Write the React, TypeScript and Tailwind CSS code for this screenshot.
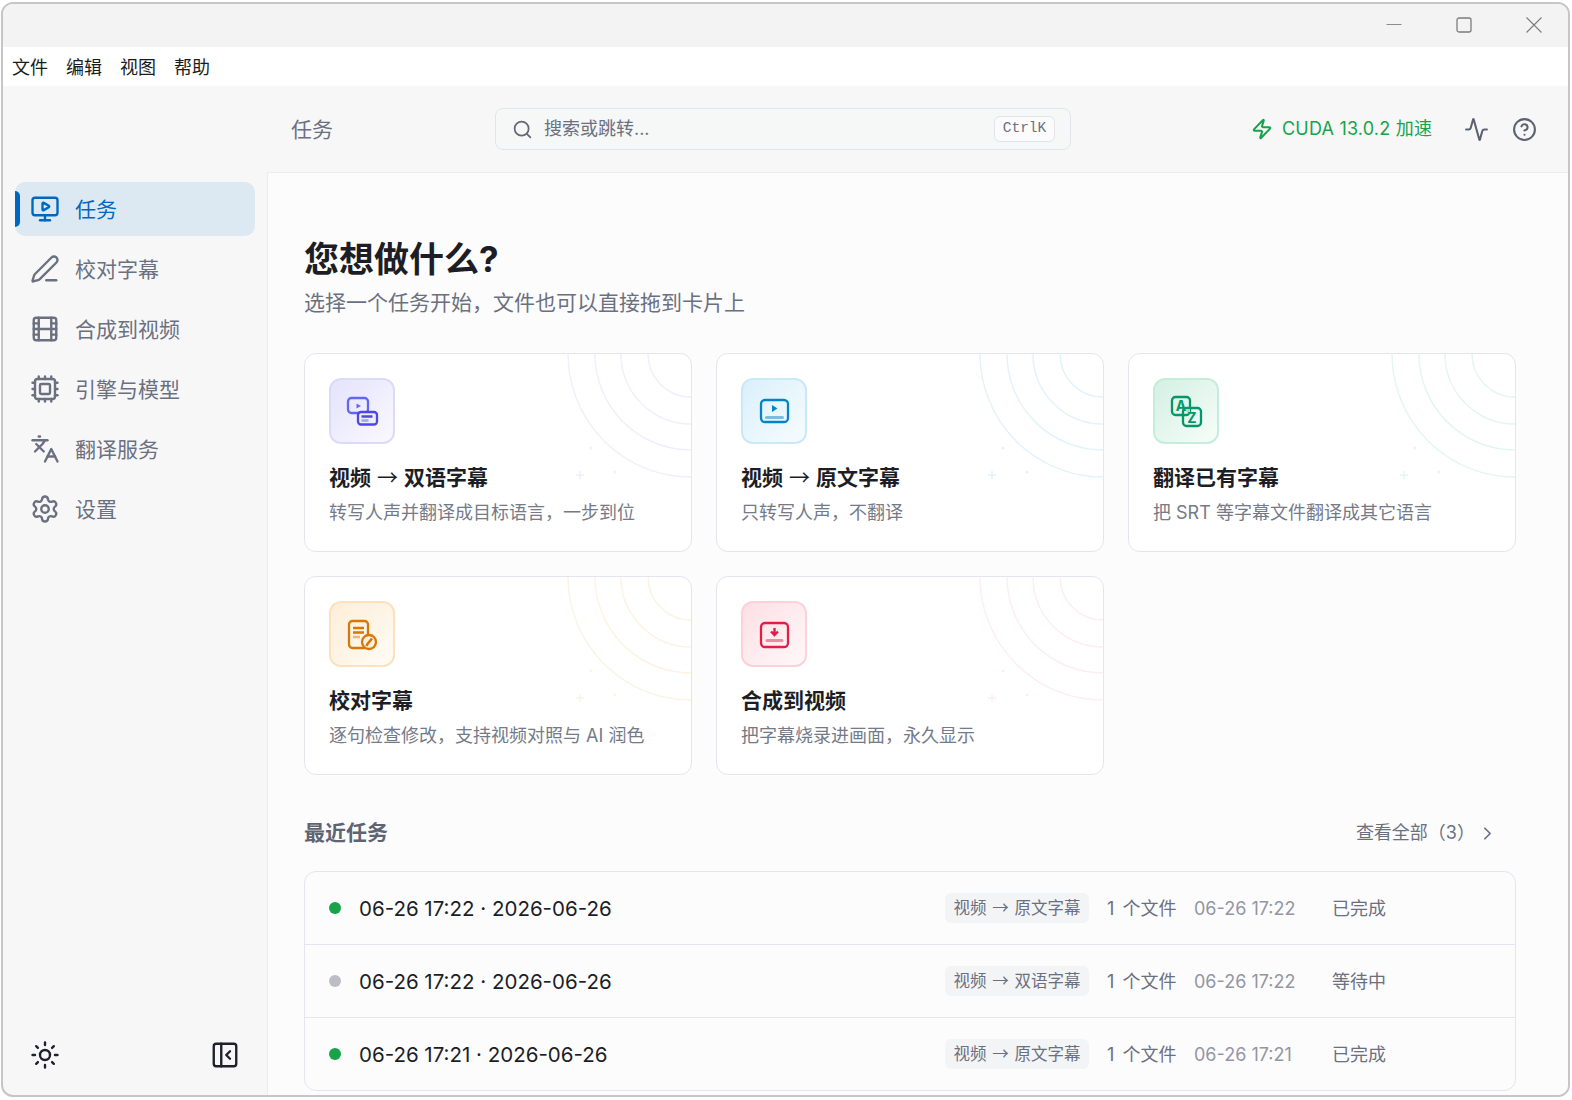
import React from 'react';
import {
  Activity,
  ChevronRight,
  CircleHelp,
  Cpu,
  Film,
  Languages,
  MonitorPlay,
  PanelLeftClose,
  PenLine,
  Search,
  Settings,
  Sun,
  Zap,
} from 'lucide-react';

const NAV = [
  { label: '任务', Icon: MonitorPlay, active: true },
  { label: '校对字幕', Icon: PenLine },
  { label: '合成到视频', Icon: Film },
  { label: '引擎与模型', Icon: Cpu },
  { label: '翻译服务', Icon: Languages },
  { label: '设置', Icon: Settings },
];

const DualIcon = () => (
  <svg width="36" height="36" viewBox="0 0 36 36" fill="none" stroke="#4f46e5" strokeWidth="2.3">
    <rect x="4" y="5" width="20" height="15" rx="3.5" stroke="#6366f1" />
    <path d="M12.5 10.5v5l4.5-2.5z" fill="#6366f1" stroke="none" />
    <rect x="14" y="19" width="19" height="12.5" rx="3" fill="#eeedfd" />
    <path d="M17.5 23.5h11" />
    <path d="M17.5 27.5h7" stroke="#a5a1f2" />
  </svg>
);

const SourceIcon = () => (
  <svg width="36" height="36" viewBox="0 0 36 36" fill="none" stroke="#0284c7" strokeWidth="2.3">
    <rect x="5" y="7" width="27" height="22" rx="4" />
    <path d="M16 12v7l5.5-3.5z" fill="#0284c7" stroke="none" />
    <path d="M10.5 24.5h16" strokeWidth="3" strokeLinecap="round" stroke="#7dbce2" />
  </svg>
);

const TranslateIcon = () => (
  <svg width="36" height="36" viewBox="0 0 36 36" fill="none" stroke="#059669" strokeWidth="2.3">
    <rect x="4" y="4" width="18" height="18" rx="3.5" />
    <rect x="15" y="15" width="18" height="18" rx="3.5" />
    <path d="M16 16h6v6z" fill="#a9dcc8" stroke="none" />
    <text x="13" y="18" textAnchor="middle" fontSize="14" fontWeight="700" fill="#059669" stroke="none" fontFamily="Inter, sans-serif">A</text>
    <text x="24" y="29.5" textAnchor="middle" fontSize="14" fontWeight="700" fill="#059669" stroke="none" fontFamily="Inter, sans-serif">Z</text>
  </svg>
);

const ProofIcon = () => (
  <svg width="36" height="36" viewBox="0 0 36 36" fill="none" stroke="#d97706" strokeWidth="2.3">
    <rect x="5" y="5" width="19" height="27" rx="3.5" />
    <path d="M9 12h11M9 16.5h11" />
    <path d="M9 21h7" stroke="#eeb67a" />
    <circle cx="25" cy="26" r="7" fill="#fff2e0" />
    <path d="M28 22.5l-4.5 5.5-1 2" strokeWidth="2.6" />
  </svg>
);

const BurnIcon = () => (
  <svg width="36" height="36" viewBox="0 0 36 36" fill="none" stroke="#e11d48" strokeWidth="2.3">
    <rect x="5" y="7" width="27" height="24" rx="4" />
    <path d="M18.5 12v6.5M15 15.5l3.5 3.5 3.5-3.5" strokeWidth="2.4" />
    <path d="M11 24.5h15" strokeWidth="3" strokeLinecap="round" stroke="#f08aa0" />
  </svg>
);

const CARDS = [
  { title: '视频 → 双语字幕', desc: '转写人声并翻译成目标语言，一步到位', Icon: DualIcon, box: 'border-[#dcdaf8] from-[#e4e3fb] to-[#faf9ff]', line: '#f0effd' },
  { title: '视频 → 原文字幕', desc: '只转写人声，不翻译', Icon: SourceIcon, box: 'border-[#c9e8f8] from-[#daf0fb] to-[#f6fcff]', line: '#e3f3fa' },
  { title: '翻译已有字幕', desc: '把 SRT 等字幕文件翻译成其它语言', Icon: TranslateIcon, box: 'border-[#c6ecdd] from-[#d3f0e4] to-[#f7fdfa]', line: '#e4f7ef' },
  { title: '校对字幕', desc: '逐句检查修改，支持视频对照与 AI 润色', Icon: ProofIcon, box: 'border-[#fbe2bd] from-[#fdeed8] to-[#fffbf5]', line: '#fcf3e3' },
  { title: '合成到视频', desc: '把字幕烧录进画面，永久显示', Icon: BurnIcon, box: 'border-[#fcd2da] from-[#fddfe4] to-[#fff8f9]', line: '#fdeef0' },
];

const TASKS = [
  { name: '06-26 17:22 · 2026-06-26', dot: 'bg-[#16a34a]', chip: '视频 → 原文字幕', time: '06-26 17:22', status: '已完成' },
  { name: '06-26 17:22 · 2026-06-26', dot: 'bg-[#bdbdc6]', chip: '视频 → 双语字幕', time: '06-26 17:22', status: '等待中' },
  { name: '06-26 17:21 · 2026-06-26', dot: 'bg-[#16a34a]', chip: '视频 → 原文字幕', time: '06-26 17:21', status: '已完成' },
];

// the arrow comes from the CJK font in the original, thin even in bold titles
const ArrowText = ({ text }: { text: string }) => {
  const parts = text.split('→');
  if (parts.length < 2) return <span>{text}</span>;
  return (
    <span>
      {parts[0]}
      <span className="mx-px font-['Noto_Sans_CJK_SC',sans-serif] leading-[0] font-normal">→</span>
      {parts[1]}
    </span>
  );
};

const CardDecor = ({ color }: { color: string }) => (
  <svg className="absolute top-0 right-0" width="130" height="130" viewBox="0 0 130 130" fill="none" stroke={color} strokeWidth="1.5">
    <circle cx="130" cy="0" r="43" />
    <circle cx="130" cy="0" r="70" />
    <circle cx="130" cy="0" r="96" />
    <circle cx="130" cy="0" r="123" />
    <circle cx="30" cy="94" r="1.5" fill={color} stroke="none" />
    <circle cx="54" cy="118" r="1.5" fill={color} stroke="none" />
    <path d="M19 117v8M15 121h8" />
  </svg>
);

const TaskCard = ({ card }: { card: (typeof CARDS)[number] }) => (
  <div className="relative h-[199px] overflow-hidden rounded-xl border border-[#e4e5ee] bg-white pt-6 pl-6">
    <CardDecor color={card.line} />
    <div className={`flex h-[66px] w-[66px] items-center justify-center rounded-xl border-2 bg-gradient-to-br ${card.box}`}>
      <card.Icon />
    </div>
    <h3 className="mt-[19px] h-[30px] text-[21px] leading-[30px] font-bold text-[#1d1e25]">
      <ArrowText text={card.title} />
    </h3>
    <p className="mt-[5px] text-[18px] leading-[30px] text-[#757a88]">{card.desc}</p>
  </div>
);

export default function App() {
  return (
    <div className="h-[1100px] w-[1572px] overflow-hidden bg-white pt-0.5 pr-0.5 pb-[3px] pl-px font-['Inter','Noto_Sans_CJK_SC',sans-serif]">
      <div className="flex h-full flex-col overflow-hidden rounded-xl border-2 border-[#c6c6c6] bg-[#f7f7f8]">
        <div className="flex h-[43px] shrink-0 items-center justify-end bg-[#f3f3f3] pr-[26px] pb-0.5">
          <svg width="16" height="16" viewBox="0 0 16 16" fill="none" stroke="#8c8c8c" strokeWidth="1" className="mr-[54px]">
            <path d="M0.5 7.5h15" />
          </svg>
          <svg width="16" height="16" viewBox="0 0 16 16" fill="none" stroke="#7c7c7c" strokeWidth="1.3" className="mr-[54px]">
            <rect x="1" y="1" width="14" height="14" rx="2" />
          </svg>
          <svg width="16" height="16" viewBox="0 0 16 16" fill="none" stroke="#7c7c7c" strokeWidth="1.1">
            <path d="M0.5 0.5l15 15M15.5 0.5l-15 15" />
          </svg>
        </div>

        <div className="flex h-[39px] shrink-0 items-center gap-[18px] bg-white pt-0.5 pl-[9px] text-[18px] text-[#1b1b1b]">
          <span>文件</span>
          <span>编辑</span>
          <span>视图</span>
          <span>帮助</span>
        </div>

        <div className="flex h-[86px] shrink-0 items-center bg-[#f7f7f8]">
          <span className="ml-[288px] w-[204px] pt-0.5 text-[21px] text-[#6b7080]">任务</span>
          <div className="flex h-[42px] w-[576px] items-center rounded-lg border border-[#e3e4ea] bg-[#f6f7f7] pr-[15px] pl-4">
            <Search size={21} strokeWidth={2} className="text-[#63687a]" />
            <span className="ml-[11px] flex-1 pb-0.5 text-[18px] text-[#6b7080]">搜索或跳转...</span>
            <span className="flex h-[26px] w-[61px] items-center justify-center rounded-md border border-[#e3e4ea] bg-[#fbfbfc] font-['Liberation_Mono',monospace] text-[14.5px] text-[#6b7080]">
              CtrlK
            </span>
          </div>
          <Zap size={22} strokeWidth={2.2} className="ml-[180px] text-[#16a34a]" />
          <span className="ml-[9px] pb-0.5 text-[18px] tracking-[0.2px] whitespace-nowrap text-[#16a34a]">CUDA 13.0.2 加速</span>
          <Activity size={25} strokeWidth={2} className="ml-[32px] text-[#5d6272]" />
          <CircleHelp size={25} strokeWidth={2} className="ml-[23px] text-[#5d6272]" />
        </div>

        <div className="flex min-h-0 flex-1">
          <aside className="flex w-[264px] shrink-0 flex-col pr-3 pl-3">
            <nav className="mt-2.5 flex flex-col gap-1.5">
              {NAV.map(({ label, Icon, active }) => (
                <div
                  key={label}
                  className={`relative flex h-[54px] items-center rounded-[10px] pl-[15px] text-[21px] ${active ? 'bg-[#dde9f2] text-[#0067c0]' : 'text-[#6b7080]'}`}
                >
                  {active && <span className="absolute top-[9px] left-0 h-[36px] w-[5px] rounded-r-full bg-[#0067c0]" />}
                  <Icon size={30} strokeWidth={1.9} />
                  <span className="ml-[15px] pt-0.5">{label}</span>
                </div>
              ))}
            </nav>
            <div className="mt-auto mb-[25px] flex items-center justify-between pr-[15px] pl-[15px] text-[#1f2029]">
              <Sun size={30} strokeWidth={1.9} />
              <PanelLeftClose size={30} strokeWidth={1.9} />
            </div>
          </aside>

          <main className="min-w-0 flex-1 overflow-hidden border-t border-l border-[#ececef] bg-[#fcfcfd] pt-[59px] pr-[52px] pl-9">
            <h1 className="text-[35px] leading-[54px] font-bold text-[#1d1e25]">您想做什么?</h1>
            <p className="mt-px text-[21px] leading-[32px] text-[#6b7080]">选择一个任务开始，文件也可以直接拖到卡片上</p>

            <div className="mt-[34px] grid grid-cols-3 gap-6">
              {CARDS.map((card) => (
                <TaskCard key={card.title} card={card} />
              ))}
            </div>

            <div className="mt-[41px] flex h-[34px] items-center justify-between pr-[18px]">
              <h2 className="text-[21px] font-bold text-[#5f6472]">最近任务</h2>
              <div className="flex items-center text-[18px] text-[#6b7080]">
                <span className="pb-0.5">查看全部（3）</span>
                <ChevronRight size={21} strokeWidth={2} className="ml-[2px]" />
              </div>
            </div>

            <div className="mt-[21px] overflow-hidden rounded-xl border border-[#e4e5ee] bg-[#fcfcfd]">
              {TASKS.map((task, i) => (
                <div key={i} className="flex h-[73px] items-center border-b border-[#e4e5ee] pl-6 last:h-[72px] last:border-b-0">
                  <span className={`h-3 w-3 rounded-full ${task.dot}`} />
                  <span className="ml-[18px] flex-1 pt-0.5 text-[20.5px] text-[#1d1e25]">{task.name}</span>
                  <span className="flex h-[30px] w-[144px] items-center justify-center rounded-md bg-[#f3f4f6] text-[16.5px] text-[#6b7080]">
                    <ArrowText text={task.chip} />
                  </span>
                  <span className="ml-[18px] w-[87px] text-[18px] [word-spacing:3px] text-[#6b7080]">1&nbsp;个文件</span>
                  <span className="w-[138px] text-[18px] text-[#9396a3]">{task.time}</span>
                  <span className="w-[183px] text-[18px] text-[#6b7080]">{task.status}</span>
                </div>
              ))}
            </div>
          </main>
        </div>
      </div>
    </div>
  );
}
